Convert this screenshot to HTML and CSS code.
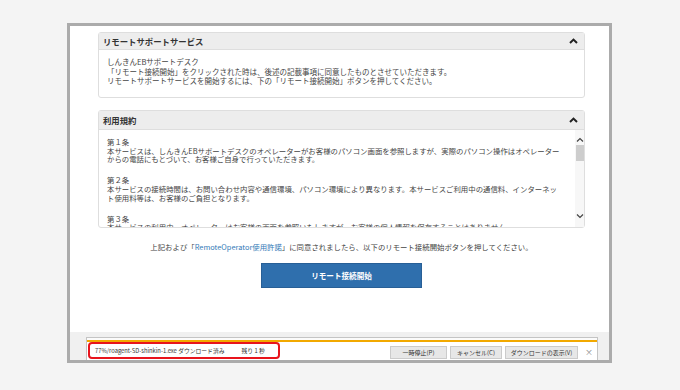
FILE: index.html
```html
<!DOCTYPE html>
<html lang="ja">
<head>
<meta charset="utf-8">
<title>リモートサポートサービス</title>
<link rel="stylesheet" href="styles.css">
</head>
<body>
<div class="frame">
  <div class="page">
    <section class="panel">
      <div class="panel-head">
        <span class="panel-title">リモートサポートサービス</span>
        <svg class="caret" width="9" height="6" viewBox="0 0 9 6"><path d="M1 5 L4.5 1.6 L8 5" fill="none" stroke="#222" stroke-width="2"/></svg>
      </div>
      <div class="panel-body intro">
        しんきんEBサポートデスク<br>
        「リモート接続開始」をクリックされた時は、後述の記載事項に同意したものとさせていただきます。<br>
        リモートサポートサービスを開始するには、下の「リモート接続開始」ボタンを押してください。
      </div>
    </section>

    <section class="panel terms-panel">
      <div class="panel-head">
        <span class="panel-title">利用規約</span>
        <svg class="caret" width="9" height="6" viewBox="0 0 9 6"><path d="M1 5 L4.5 1.6 L8 5" fill="none" stroke="#222" stroke-width="2"/></svg>
      </div>
      <div class="terms-body">
        <div class="terms-text">
          <p>第１条<br>本サービスは、しんきんEBサポートデスクのオペレーターがお客様のパソコン画面を参照しますが、実際のパソコン操作はオペレーター<br>からの電話にもとづいて、お客様ご自身で行っていただきます。</p>
          <p>第２条<br>本サービスの接続時間は、お問い合わせ内容や通信環境、パソコン環境により異なります。本サービスご利用中の通信料、インターネッ<br>ト使用料等は、お客様のご負担となります。</p>
          <p>第３条<br>本サービスの利用中、オペレーターはお客様の画面を参照いたしますが、お客様の個人情報を保存することはありません。</p>
        </div>
        <div class="scrollbar">
          <svg class="sb-arrow" width="8" height="6" viewBox="0 0 8 6"><path d="M1 4.5 L4 1.5 L7 4.5" fill="none" stroke="#444" stroke-width="1.2"/></svg>
          <div class="sb-thumb"></div>
          <div class="sb-track"></div>
          <svg class="sb-arrow" width="8" height="6" viewBox="0 0 8 6"><path d="M1 1.5 L4 4.5 L7 1.5" fill="none" stroke="#444" stroke-width="1.2"/></svg>
        </div>
      </div>
    </section>

    <p class="agree">上記および「<a class="link" href="#">RemoteOperator使用許諾</a>」に同意されましたら、以下のリモート接続開始ボタンを押してください。</p>
    <div class="btn-wrap"><button class="start-btn" type="button">リモート接続開始</button></div>
  </div>

  <div class="dl-strip">
    <div class="dl-bar">
      <div class="dl-accent"></div>
      <div class="dl-row">
        <div class="dl-status"><span>77%/roagent-SD-shinkin-1.exe ダウンロード済み</span><span class="dl-remain">残り 1 秒</span></div>
        <div class="dl-actions">
          <span class="dl-btn w-pause">一時停止(P)</span>
          <span class="dl-btn w-cancel">キャンセル(C)</span>
          <span class="dl-btn w-view">ダウンロードの表示(V)</span>
        </div>
        <span class="dl-close">×</span>
      </div>
    </div>
  </div>
</div>
</body>
</html>
```

FILE: styles.css
```css
* { box-sizing: border-box; }
html, body { margin: 0; padding: 0; }
body {
  background: #f4f4f4;
  width: 680px;
  height: 390px;
  overflow: hidden;
  font-family: "Noto Sans CJK JP", "Noto Sans", sans-serif;
  color: #444;
}
.frame {
  margin: 23px 0 0 67px;
  width: 545px;
  height: 340px;
  border: 3px solid #ababab;
  background: #fff;
  display: flex;
  flex-direction: column;
}
.page {
  height: 307px;
  padding: 6px 24px 0 28px;
  background: #fff;
}
.panel {
  border: 1px solid #dedede;
  border-radius: 3px;
  background: #fff;
}
.panel-head {
  height: 17px;
  background: #ededed;
  border-bottom: 1px solid #dedede;
  display: flex;
  align-items: center;
  justify-content: space-between;
  padding: 0 6px 0 4px;
}
.terms-panel .panel-head { height: 19px; }
.panel-title {
  font-size: 8.4px;
  font-weight: bold;
  color: #333;
  line-height: 1;
}
.caret { display: block; }
.intro {
  padding: 7px 8px 11px 8px;
  font-size: 7.5px;
  line-height: 9.6px;
  color: #444;
  white-space: nowrap;
}
.terms-panel { margin-top: 12px; }
.terms-body {
  height: 97px;
  display: flex;
  overflow: hidden;
}
.terms-text {
  flex: 1;
  padding: 8px 0 0 8px;
  font-size: 7.4px;
  line-height: 8.8px;
  color: #444;
  white-space: nowrap;
  overflow: hidden;
}
.terms-text p { margin: 0 0 12px 0; }
.scrollbar {
  width: 9px;
  background: #f7f7f7;
  display: flex;
  flex-direction: column;
  align-items: center;
  padding: 7px 0 8px 0;
}
.sb-arrow { display: block; }
.sb-thumb {
  width: 8px;
  height: 16px;
  margin-top: 2px;
  background: #cdcdcd;
}
.sb-track { flex: 1; }
.agree {
  margin: 14px 0 0 0;
  text-align: center;
  font-size: 7.4px;
  line-height: 9px;
  color: #444;
  white-space: nowrap;
}
.link { color: #337ab7; text-decoration: none; }
.btn-wrap {
  display: flex;
  justify-content: center;
  margin-top: 12px;
}
.start-btn {
  width: 161px;
  height: 25px;
  background: #2f6fad;
  border: 1px solid #285f96;
  color: #fff;
  font-family: "Noto Sans CJK JP", "Noto Sans", sans-serif;
  font-size: 7.6px;
  font-weight: bold;
  padding: 0;
}
.dl-strip {
  flex: 1;
  background: #f0f0f0;
  padding: 5px 11px 0 16px;
  display: flex;
}
.dl-bar {
  flex: 1;
  background: #fbfbfb;
  border: 1px solid #c4c4c4;
  border-bottom: none;
  padding-top: 2px;
  display: flex;
  flex-direction: column;
}
.dl-accent {
  height: 2px;
  background: #f2a900;
}
.dl-row {
  flex: 1;
  display: flex;
  align-items: flex-end;
  padding: 0 0 1px 1px;
  background: #fff;
}
.dl-status {
  width: 192px;
  height: 17px;
  border: 2px solid #e8141c;
  border-radius: 4px;
  display: flex;
  align-items: center;
  padding-left: 5px;
  font-size: 5.8px;
  color: #333;
  white-space: nowrap;
}
.dl-remain { margin-left: 17px; }
.dl-actions {
  margin-left: auto;
  display: flex;
  gap: 3px;
}
.dl-btn {
  height: 13px;
  background: #e7e7e7;
  border: 1px solid #cbcbcb;
  font-size: 6px;
  color: #333;
  display: flex;
  align-items: center;
  justify-content: center;
  white-space: nowrap;
}
.w-pause { width: 57px; }
.w-cancel { width: 52px; }
.w-view { width: 73px; }
.dl-close {
  width: 8px;
  margin: 0 4px 2px 7px;
  font-size: 8px;
  line-height: 10px;
  color: #888;
  text-align: center;
}
```
